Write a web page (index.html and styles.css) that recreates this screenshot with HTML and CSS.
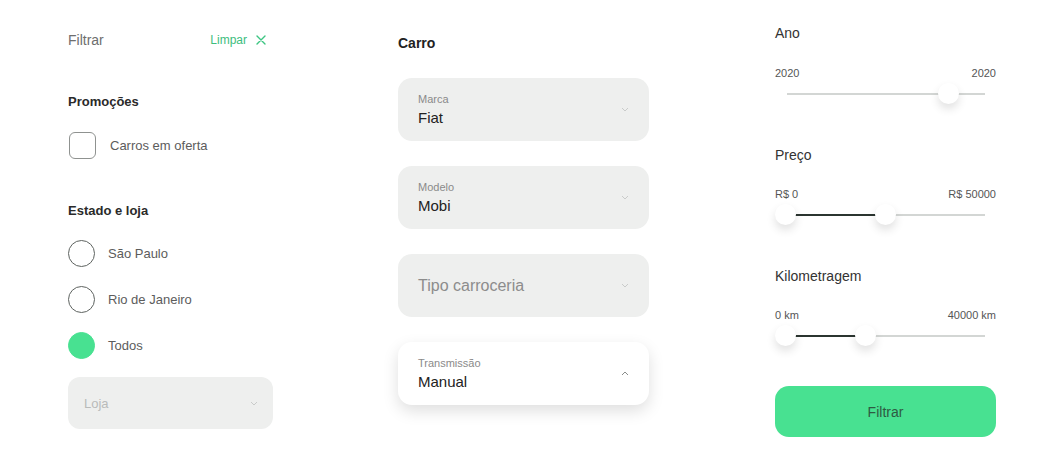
FILE: index.html
```html
<!DOCTYPE html>
<html lang="pt-BR">
<head>
<meta charset="utf-8">
<title>Filtros</title>
<link rel="stylesheet" href="styles.css">
</head>
<body>
<div class="page">
  <aside class="col col-left">
    <div class="filter-head">
      <span class="filter-title">Filtrar</span>
      <button class="clear">Limpar
        <svg width="10" height="10" viewBox="0 0 10 10"><path d="M1 1 L9 9 M9 1 L1 9" stroke="#3dc583" stroke-width="1.4" stroke-linecap="round"/></svg>
      </button>
    </div>

    <h3 class="group-title promo">Promoções</h3>
    <label class="check-row">
      <span class="checkbox"></span>
      <span class="check-label">Carros em oferta</span>
    </label>

    <h3 class="group-title state">Estado e loja</h3>
    <div class="radios">
      <label class="radio-row"><span class="radio"></span><span class="radio-label">São Paulo</span></label>
      <label class="radio-row"><span class="radio"></span><span class="radio-label">Rio de Janeiro</span></label>
      <label class="radio-row"><span class="radio checked"></span><span class="radio-label">Todos</span></label>
    </div>

    <div class="select small">
      <span class="placeholder small-ph">Loja</span>
      <svg class="chev" width="8" height="5" viewBox="0 0 8 5"><path d="M1 1 L4 4 L7 1" fill="none" stroke="#c9cbca" stroke-width="1"/></svg>
    </div>
  </aside>

  <section class="col col-mid">
    <h3 class="mid-title">Carro</h3>
    <div class="selects">
      <div class="select">
        <div class="sel-text"><span class="sel-label">Marca</span><span class="sel-value">Fiat</span></div>
        <svg class="chev" width="8" height="5" viewBox="0 0 8 5"><path d="M1 1 L4 4 L7 1" fill="none" stroke="#c9cbca" stroke-width="1"/></svg>
      </div>
      <div class="select">
        <div class="sel-text"><span class="sel-label">Modelo</span><span class="sel-value">Mobi</span></div>
        <svg class="chev" width="8" height="5" viewBox="0 0 8 5"><path d="M1 1 L4 4 L7 1" fill="none" stroke="#c9cbca" stroke-width="1"/></svg>
      </div>
      <div class="select">
        <span class="placeholder">Tipo carroceria</span>
        <svg class="chev" width="8" height="5" viewBox="0 0 8 5"><path d="M1 1 L4 4 L7 1" fill="none" stroke="#c9cbca" stroke-width="1"/></svg>
      </div>
      <div class="select open">
        <div class="sel-text"><span class="sel-label">Transmissão</span><span class="sel-value">Manual</span></div>
        <svg class="chev up" width="8" height="5" viewBox="0 0 8 5"><path d="M1 4 L4 1 L7 4" fill="none" stroke="#8a8d8b" stroke-width="1"/></svg>
      </div>
    </div>
  </section>

  <aside class="col col-right">
    <h3 class="range-title">Ano</h3>
    <div class="range-values"><span>2020</span><span>2020</span></div>
    <div class="slider">
      <div class="track"></div>
      <span class="thumb" style="left:163px"></span>
    </div>

    <h3 class="range-title gap">Preço</h3>
    <div class="range-values"><span>R$ 0</span><span>R$ 50000</span></div>
    <div class="slider">
      <div class="track"></div>
      <div class="active" style="left:10px;width:100px"></div>
      <span class="thumb" style="left:0px"></span>
      <span class="thumb" style="left:100px"></span>
    </div>

    <h3 class="range-title gap">Kilometragem</h3>
    <div class="range-values"><span>0 km</span><span>40000 km</span></div>
    <div class="slider">
      <div class="track"></div>
      <div class="active" style="left:10px;width:80px"></div>
      <span class="thumb" style="left:0px"></span>
      <span class="thumb" style="left:80px"></span>
    </div>

    <button class="submit">Filtrar</button>
  </aside>
</div>
</body>
</html>
```

FILE: styles.css
```css
* { box-sizing: border-box; }

body {
  margin: 0;
  background: #ffffff;
  font-family: "Liberation Sans", Arial, sans-serif;
  color: #222;
}

.page {
  display: flex;
  align-items: flex-start;
  gap: 125px;
  padding-left: 68px;
  width: 1049px;
  height: 450px;
}

.col { display: flex; flex-direction: column; }

/* Left column */
.col-left { width: 205px; padding-top: 31px; }

.filter-head {
  display: flex;
  justify-content: space-between;
  align-items: center;
  width: 198px;
  height: 18px;
}

.filter-title { font-size: 14px; color: #6e6e6e; }

.clear {
  display: flex;
  align-items: center;
  gap: 9px;
  border: 0;
  background: none;
  padding: 0;
  font-family: inherit;
  font-size: 12px;
  color: #3dbd7d;
}

.group-title {
  margin: 0;
  font-size: 13px;
  line-height: 18px;
  font-weight: 600;
  color: #2a2a2a;
}

.promo { margin-top: 44px; }
.state { margin-top: 43px; }

.check-row {
  display: flex;
  align-items: center;
  gap: 14px;
  margin-top: 21px;
  padding-left: 1px;
}

.checkbox {
  width: 27px;
  height: 27px;
  border: 1px solid #8f9290;
  border-radius: 6px;
}

.check-label, .radio-label { font-size: 13px; color: #5c5c5c; }

.radios {
  display: flex;
  flex-direction: column;
  gap: 19px;
  margin-top: 20px;
}

.radio-row { display: flex; align-items: center; gap: 13px; }

.radio {
  width: 27px;
  height: 27px;
  border: 1px solid #5e6360;
  border-radius: 50%;
}

.radio.checked { background: #48e191; border-color: #48e191; }

.select {
  display: flex;
  align-items: center;
  justify-content: space-between;
  height: 63px;
  padding: 0 20px 0 20px;
  background: #eeefee;
  border-radius: 14px;
}

.select.small {
  margin-top: 18px;
  height: 52px;
  padding: 0 15px 0 16px;
  border-radius: 12px;
}

.placeholder { font-size: 16px; color: #8c8c8c; }
.small-ph { font-size: 13px; color: #b9bbba; }

.chev { flex: none; }

/* Middle column */
.col-mid { width: 251px; padding-top: 34px; }

.mid-title {
  margin: 0;
  font-size: 14px;
  line-height: 18px;
  font-weight: 600;
  color: #222;
}

.selects {
  display: flex;
  flex-direction: column;
  gap: 25px;
  margin-top: 26px;
}

.sel-text { display: flex; flex-direction: column; padding-top: 1px; }

.sel-label {
  font-size: 11px;
  line-height: 14px;
  color: #8a8a8a;
}

.sel-value {
  margin-top: 2px;
  font-size: 15px;
  line-height: 20px;
  color: #222;
}

.select.open {
  background: #ffffff;
  box-shadow: 0 6px 16px rgba(0, 0, 0, 0.13);
}

/* Right column */
.col-right { width: 221px; padding-top: 24px; margin-left: 1px; }

.range-title {
  margin: 0;
  font-size: 14px;
  line-height: 18px;
  font-weight: 400;
  color: #333;
}

.range-title.gap { margin-top: 42px; }

.range-values {
  display: flex;
  justify-content: space-between;
  margin-top: 24px;
  font-size: 11px;
  line-height: 14px;
  color: #555;
}

.range-title.gap + .range-values { margin-top: 23px; }

.slider {
  position: relative;
  height: 20px;
  margin-top: 4px;
}

.track {
  position: absolute;
  left: 12px;
  right: 11px;
  top: 9px;
  height: 2px;
  background: #d3d6d4;
}

.active {
  position: absolute;
  top: 9px;
  height: 2px;
  background: #2b3530;
}

.thumb {
  position: absolute;
  top: -1px;
  width: 21px;
  height: 21px;
  border-radius: 50%;
  background: #fff;
  box-shadow: 0 5px 10px rgba(0, 0, 0, 0.12);
}

.submit {
  margin-top: 40px;
  height: 51px;
  width: 221px;
  border: 0;
  border-radius: 14px;
  background: #48e191;
  font-family: inherit;
  font-size: 14px;
  color: #2f5a43;
}
```
